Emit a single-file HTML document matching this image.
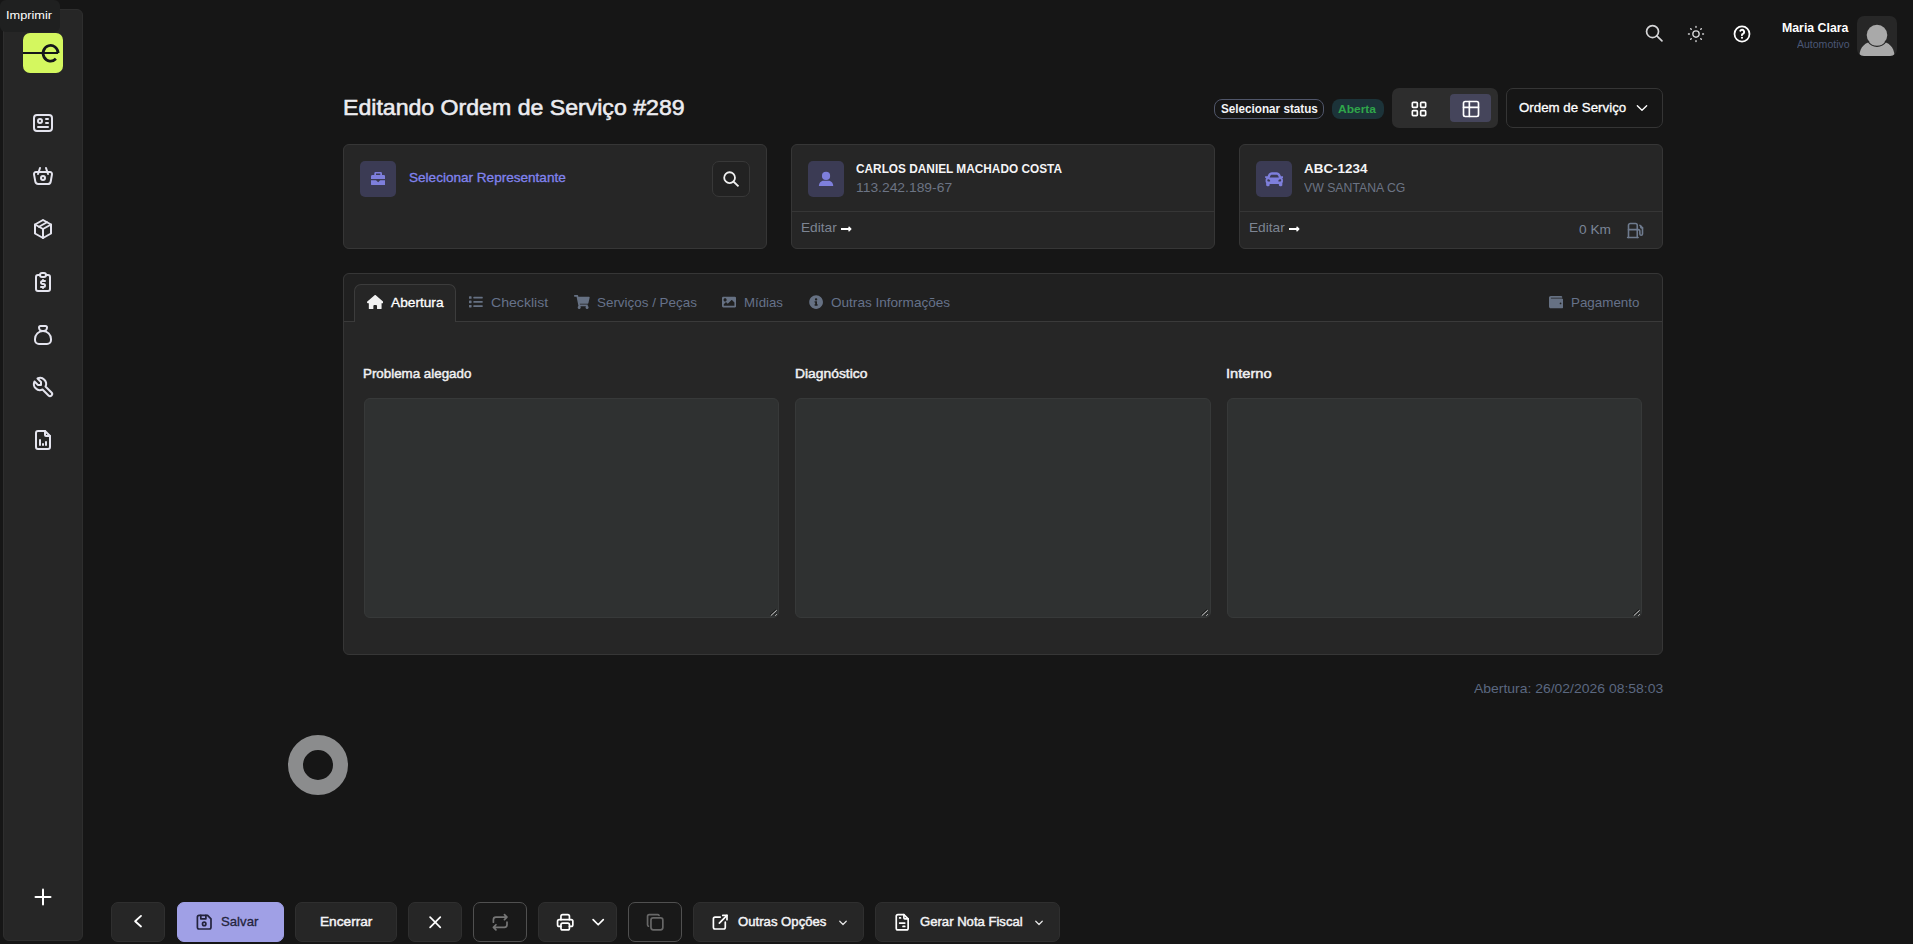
<!DOCTYPE html>
<html lang="pt-br">
<head>
<meta charset="utf-8">
<title>Editando Ordem de Serviço #289</title>
<style>
*{box-sizing:border-box;margin:0;padding:0}
html,body{width:1913px;height:944px;overflow:hidden;background:#161616}
body{font-family:"Liberation Sans",sans-serif;color:#f1f1f4;position:relative;font-size:13px}
.a{position:absolute}
.t{position:absolute;white-space:nowrap;line-height:1}
svg{display:block;position:absolute}
.st{fill:none;stroke:currentColor;stroke-width:2;stroke-linecap:round;stroke-linejoin:round}

/* sidebar */
#side{left:3px;top:9px;width:80px;height:932px;background:#262626;border:1px solid #2e2e2e;border-radius:6px}
#tip{left:0;top:0;width:60px;height:31.500px;background:#1f2020;border-radius:6px}
#logo{left:23px;top:33px;width:40px;height:40px;background:#d4f75f;border-radius:7px;overflow:hidden}
.si{color:#e4e4ee;width:24px;height:24px;left:31px}

/* cards */
.card{background:#262626;border:1px solid #363636;border-radius:6px}
.ib{width:36px;height:36px;border-radius:5px;background:#3b3b54}
.hr{height:1px;background:#363636}
.mut{color:#6c7484}

/* buttons */
.btn{top:902px;height:40px;border-radius:7px;background:#262626;border:1px solid #2f2f2f}
.btn.o{background:#191919;border-color:#505050}

.tabt{font-size:13px;color:#66728a}
.lbl{font-size:13px;color:#f1f1f3;-webkit-text-stroke:.45px #f1f1f3}
.ta{top:398px;width:415.330px;height:220px;background:#2f3131;border:1px solid #373939;border-radius:6px}
.rz{top:609px;width:8px;height:8px;fill:none;stroke-width:.9}
.bi{width:20.400px;height:20.400px;top:911.700px}
.bt{font-size:13px;color:#f4f4f6;top:915.200px;-webkit-text-stroke:.45px #f4f4f6}
</style>
</head>
<body>

<!-- SIDEBAR -->
<div class="a" id="side"></div>
<div class="a" id="tip"></div>
<div class="t" id="t_tip" style="left:5.89px;transform:scaleX(1.1605);transform-origin:0 0;top:10px;font-size:11px;color:#fff">Imprimir</div>
<div class="a" id="logo"><svg width="40" height="40" viewBox="0 0 40 40" style="left:0;top:0"><path d="M0 20.100H35" fill="none" stroke="#15171a" stroke-width="2"/><path d="M35.100 20.100A7.500 7.800 0 1 0 32.900 25.800" fill="none" stroke="#15171a" stroke-width="2.800"/></svg></div>
<svg class="si st" style="top:111px" viewBox="0 0 24 24"><path d="M3 7a3 3 0 0 1 3-3h12a3 3 0 0 1 3 3v10a3 3 0 0 1-3 3h-12a3 3 0 0 1-3-3z"/><path d="M7 10a2 2 0 1 0 4 0a2 2 0 1 0-4 0"/><path d="M15 8h2"/><path d="M15 12h2"/><path d="M7 16h10"/></svg>
<svg class="si st" style="top:164px" viewBox="0 0 24 24"><path d="M10 14a2 2 0 1 0 4 0a2 2 0 0 0-4 0"/><path d="M5.001 8h13.999a2 2 0 0 1 1.977 2.304l-1.255 7.152a3 3 0 0 1-2.966 2.544h-9.512a3 3 0 0 1-2.965-2.544l-1.255-7.152a2 2 0 0 1 1.977-2.304z"/><path d="M17 10l-2-6"/><path d="M7 10l2-6"/></svg>
<svg class="si st" style="top:217px" viewBox="0 0 24 24"><path d="M12 3l8 4.5v9l-8 4.500l-8-4.500v-9l8-4.500"/><path d="M12 12l8-4.500"/><path d="M12 12v9"/><path d="M12 12l-8-4.500"/><path d="M16 5.250l-8 4.500"/></svg>
<svg class="si st" style="top:270px" viewBox="0 0 24 24"><path d="M9 5h-2a2 2 0 0 0-2 2v12a2 2 0 0 0 2 2h10a2 2 0 0 0 2-2v-12a2 2 0 0 0-2-2h-2"/><path d="M9 5a2 2 0 0 1 2-2h2a2 2 0 0 1 2 2a2 2 0 0 1-2 2h-2a2 2 0 0 1-2-2z"/><path d="M14 11h-2.500a1.500 1.500 0 0 0 0 3h1a1.500 1.500 0 0 1 0 3h-2.500"/><path d="M12 17v1m0-8v1"/></svg>
<svg class="si st" style="top:323px" viewBox="0 0 24 24"><path d="M9.500 3h5a1.500 1.500 0 0 1 1.500 1.500a3.500 3.500 0 0 1-3.500 3.500h-1a3.500 3.500 0 0 1-3.500-3.500a1.500 1.500 0 0 1 1.500-1.500z"/><path d="M4 17v-1a8 8 0 1 1 16 0v1a4 4 0 0 1-4 4h-8a4 4 0 0 1-4-4z"/></svg>
<svg class="si st" style="top:375px" viewBox="0 0 24 24"><path d="M7 10h3v-3l-3.500-3.500a6 6 0 0 1 8 8l6 6a2 2 0 0 1-3 3l-6-6a6 6 0 0 1-8-8l3.500 3.500"/></svg>
<svg class="si st" style="top:428px" viewBox="0 0 24 24"><path d="M14 3v4a1 1 0 0 0 1 1h4"/><path d="M17 21h-10a2 2 0 0 1-2-2v-14a2 2 0 0 1 2-2h7l5 5v11a2 2 0 0 1-2 2z"/><path d="M9 17v-5"/><path d="M12 17v-1"/><path d="M15 17v-3"/></svg>
<svg class="si st" style="top:885px;color:#fff" viewBox="0 0 24 24"><path d="M12 4.500v15"/><path d="M4.500 12h15"/></svg>

<!-- HEADER -->
<svg class="st" style="left:1643.750px;top:23.250px;width:20.500px;height:20.500px;color:#d6d6d8;stroke-width:2" viewBox="0 0 24 24"><path d="M3 10a7 7 0 1 0 14 0a7 7 0 1 0-14 0"/><path d="M21 21l-6-6"/></svg>
<svg class="st" style="left:1686px;top:24px;width:20px;height:20px;color:#d6d6d8;stroke-width:1.7" viewBox="0 0 24 24"><path d="M8.200 12a3.800 3.800 0 1 0 7.600 0a3.800 3.800 0 1 0-7.600 0"/><path d="M3 12h1m8-9v1m8 8h1m-9 8v1m-6.400-15.400l.7.7m12.100-.7l-.7.7m0 11.400l.7.700m-12.100-.7l-.7.700"/></svg>
<svg class="st" style="left:1732px;top:24px;width:20px;height:20px;color:#fff;stroke-width:2.1" viewBox="0 0 24 24"><path d="M3 12a9 9 0 1 0 18 0a9 9 0 1 0-18 0"/><path d="M12 16.500v.01" stroke-width="2.6"/><path d="M12 13.300a1.500 1.500 0 0 1 1-1.500a2.500 2.500 0 1 0-3-3.700" stroke-width="2.4"/></svg>

<div class="t" id="uname" style="left:1781.87px;transform:scaleX(0.9471);transform-origin:0 0;top:21px;font-size:13px;font-weight:700;color:#fff">Maria Clara</div>
<div class="t" id="urole" style="left:1796.58px;transform:scaleX(1.051);transform-origin:0 0;top:40px;font-size:10px;color:#4b5675">Automotivo</div>
<div class="a" id="avatar" style="left:1857px;top:16px;width:40px;height:40px;border-radius:7px;background:#272727;overflow:hidden"><svg width="40" height="40" viewBox="0 0 40 40" style="left:0;top:0"><circle cx="20" cy="19" r="10.300" fill="#a9a9a9"/><path d="M2.500 40c0-9.500 7-14 12-14.500a10.300 10.300 0 0 0 11 0c5 .5 12 5 12 14.500z" fill="#a9a9a9"/><path d="M11 25.500a10.800 10.800 0 0 0 18 0" fill="none" stroke="#272727" stroke-width="1.200"/></svg></div>

<!-- TITLE ROW -->
<div class="t" id="title" style="left:342.57px;transform:scaleX(1.05);transform-origin:0 0;top:96.7px;font-size:22px;-webkit-text-stroke:.55px #ececf0;color:#ececf0">Editando Ordem de Serviço #289</div>


<div class="a" style="left:1214px;top:99px;width:110px;height:20px;border:1px solid #50566a;border-radius:8px;background:#161616"></div>
<div class="t" id="t_selst" style="left:1220.88px;transform:scaleX(0.9745);transform-origin:0 0;top:103px;font-size:12px;font-weight:700;color:#f4f4f6">Selecionar status</div>
<div class="a" style="left:1332px;top:99px;width:52px;height:20px;border-radius:8px;background:#1c3339"></div>
<div class="t" id="t_aberta" style="left:1338.46px;transform:scaleX(1.0912);transform-origin:0 0;top:103.500px;font-size:11px;font-weight:700;color:#2fa64a">Aberta</div>
<div class="a" style="left:1392px;top:88px;width:106px;height:40px;border-radius:7px;background:#2d2d2d"></div>
<div class="a" style="left:1450px;top:94px;width:41px;height:28px;border-radius:4px;background:#45455b"></div>
<svg class="st" style="left:1409px;top:99.300px;width:20px;height:20px;color:#fff" viewBox="0 0 24 24"><path d="M4 5a1 1 0 0 1 1-1h4a1 1 0 0 1 1 1v4a1 1 0 0 1-1 1h-4a1 1 0 0 1-1-1z"/><path d="M14 5a1 1 0 0 1 1-1h4a1 1 0 0 1 1 1v4a1 1 0 0 1-1 1h-4a1 1 0 0 1-1-1z"/><path d="M4 15a1 1 0 0 1 1-1h4a1 1 0 0 1 1 1v4a1 1 0 0 1-1 1h-4a1 1 0 0 1-1-1z"/><path d="M14 15a1 1 0 0 1 1-1h4a1 1 0 0 1 1 1v4a1 1 0 0 1-1 1h-4a1 1 0 0 1-1-1z"/></svg>
<svg class="st" style="left:1460.700px;top:98.900px;width:20px;height:20px;color:#fff" viewBox="0 0 24 24"><path d="M3 5a2 2 0 0 1 2-2h14a2 2 0 0 1 2 2v14a2 2 0 0 1-2 2h-14a2 2 0 0 1-2-2z"/><path d="M3 10h18"/><path d="M10 3v18"/></svg>
<div class="a" style="left:1506px;top:88px;width:157px;height:40px;border-radius:7px;background:#161616;border:1px solid #353535"></div>
<div class="t" id="t_os" style="left:1518.74px;transform:scaleX(1.0231);transform-origin:0 0;top:100.5px;font-size:13px;color:#fff;-webkit-text-stroke:.3px #fff">Ordem de Serviço</div>
<svg class="st" style="left:1633.900px;top:99.800px;width:16px;height:16px;color:#fff;stroke-width:2" viewBox="0 0 24 24"><path d="M5 8.500l7 7l7-7"/></svg>
<!-- TOP CARDS -->
<div class="a card" style="left:343px;top:144px;width:424px;height:105px"></div>
<div class="a card" style="left:791px;top:144px;width:424px;height:105px"></div>
<div class="a card" style="left:1239px;top:144px;width:424px;height:105px"></div>


<!-- card 1 -->
<div class="a ib" style="left:360px;top:161px"></div>
<svg style="left:370.900px;top:172px;width:14.300px;height:13.300px" viewBox="0 0 14.300 13.300"><path fill="#7e7fdc" fill-rule="evenodd" d="M3.300 3V1.400A1.400 1.400 0 0 1 4.700 0h4.900A1.400 1.400 0 0 1 11 1.400V3h1.900A1.400 1.400 0 0 1 14.300 4.400V7H0V4.400A1.400 1.400 0 0 1 1.400 3zM5 3h4.300V1.600H5zM0 8.200h5l2.150 2.100L9.300 8.200h5V11.900a1.400 1.400 0 0 1-1.400 1.400H1.400A1.400 1.400 0 0 1 0 11.900z"/></svg>
<div class="t" id="t_selrep" style="left:408.53px;transform:scaleX(1.0427);transform-origin:0 0;top:170.8px;font-size:13px;color:#8183ee;-webkit-text-stroke:.3px #8183ee">Selecionar Representante</div>
<div class="a" style="left:712px;top:161px;width:38px;height:36px;border-radius:7px;background:#222;border:1px solid #383838"></div>
<svg style="left:720px;top:168px;width:22px;height:22px;fill:none;stroke:#f0f0f0;stroke-width:1.800" viewBox="0 0 22 22"><circle cx="9.600" cy="9.650" r="5.400"/><path d="M13.400 13.500L18.500 18.400"/></svg>
<!-- card 2 -->
<div class="a ib" style="left:808px;top:161px"></div>
<svg style="left:818px;top:171px;width:16px;height:16px" viewBox="0 0 16 16"><circle cx="8.050" cy="4.900" r="4.100" fill="#7e7fdc"/><path fill="#7e7fdc" d="M.9 15c0-3 2-5.300 4.600-5.300h5.100c2.600 0 4.600 2.300 4.600 5.300z"/></svg>
<div class="t" id="t_name" style="left:856.45px;transform:scaleX(0.9102);transform-origin:0 0;top:161.5px;font-size:13px;font-weight:700;color:#f4f4f6">CARLOS DANIEL MACHADO COSTA</div>
<div class="t mut" id="t_cpf" style="left:856.13px;transform:scaleX(1.0663);transform-origin:0 0;top:180.5px;font-size:13px">113.242.189-67</div>
<div class="a hr" style="left:792px;top:211px;width:422px"></div>
<div class="t" id="t_ed1" style="left:801.28px;transform:scaleX(1.0515);transform-origin:0 0;top:220.7px;font-size:13px;color:#7d8593">Editar</div>
<svg style="left:841px;top:222.500px;width:10.500px;height:12px" viewBox="0 0 448 512"><path fill="#fff" d="M313.941 216H12c-6.627 0-12 5.373-12 12v56c0 6.627 5.373 12 12 12h301.941v46.059c0 21.382 25.851 32.090 40.971 16.971l86.059-86.059c9.373-9.373 9.373-24.569 0-33.941l-86.059-86.059c-15.119-15.119-40.971-4.411-40.971 16.971V216z"/></svg>
<!-- card 3 -->
<div class="a ib" style="left:1256px;top:161px"></div>
<svg style="left:1264.800px;top:169.800px;width:18.500px;height:18.500px" viewBox="0 0 512 512"><path fill="#7e7fdc" d="M499.990 176h-59.870l-16.640-41.600C406.380 91.630 365.570 64 319.500 64h-127c-46.060 0-86.880 27.630-103.990 70.400L71.870 176H12.010C4.200 176-1.530 183.340.370 190.910l6 24C7.700 220.250 12.500 224 18.010 224h20.070C24.650 235.730 16 252.780 16 272v48c0 16.120 6.160 30.670 16 41.930V416c0 17.670 14.330 32 32 32h32c17.670 0 32-14.330 32-32v-32h256v32c0 17.670 14.330 32 32 32h32c17.670 0 32-14.330 32-32v-54.070c9.840-11.250 16-25.800 16-41.930v-48c0-19.220-8.650-36.270-22.070-48H494c5.510 0 10.310-3.750 11.640-9.090l6-24c1.890-7.570-3.840-14.910-11.650-14.910zm-352.060-17.830c7.290-18.220 24.940-30.170 44.570-30.170h127c19.630 0 37.280 11.950 44.570 30.170L384 208H128l19.930-49.830zM96 319.800c-19.200 0-32-12.760-32-31.900S76.800 256 96 256s48 28.710 48 47.850-28.800 15.950-48 15.950zm320 0c-19.200 0-48 3.190-48-15.950S396.800 256 416 256s32 12.760 32 31.900-12.800 31.900-32 31.900z"/></svg>
<div class="t" id="t_plate" style="left:1303.8px;transform:scaleX(1.0333);transform-origin:0 0;top:161.5px;font-size:13px;font-weight:700;color:#f4f4f6">ABC-1234</div>
<div class="t mut" id="t_model" style="left:1304.09px;transform:scaleX(0.9443);transform-origin:0 0;top:180.5px;font-size:13px">VW SANTANA CG</div>
<div class="a hr" style="left:1240px;top:211px;width:422px"></div>
<div class="t" id="t_ed2" style="left:1249.28px;transform:scaleX(1.0515);transform-origin:0 0;top:220.7px;font-size:13px;color:#7d8593">Editar</div>
<svg style="left:1289px;top:222.500px;width:10.500px;height:12px" viewBox="0 0 448 512"><path fill="#fff" d="M313.941 216H12c-6.627 0-12 5.373-12 12v56c0 6.627 5.373 12 12 12h301.941v46.059c0 21.382 25.851 32.090 40.971 16.971l86.059-86.059c9.373-9.373 9.373-24.569 0-33.941l-86.059-86.059c-15.119-15.119-40.971-4.411-40.971 16.971V216z"/></svg>
<div class="t" id="t_km" style="left:1578.7px;transform:scaleX(1.0552);transform-origin:0 0;top:223px;font-size:13px;color:#7a8597">0 Km</div>
<svg class="st" style="left:1625px;top:219.500px;width:21px;height:21px;color:#6f7b8e;stroke-width:1.800" viewBox="0 0 24 24"><path d="M14 11h1a2 2 0 0 1 2 2v3a1.500 1.500 0 0 0 3 0v-7l-3-3"/><path d="M4 20v-14a2 2 0 0 1 2-2h6a2 2 0 0 1 2 2v14"/><path d="M3 20h12"/><path d="M18 7v1a1 1 0 0 0 1 1h1"/><path d="M4 11h10"/></svg>
<!-- MAIN CARD -->
<div class="a card" id="main" style="left:343px;top:273px;width:1320px;height:382px"></div>


<div class="a" style="left:344px;top:274px;width:1318px;height:47px;background:#202020;border-radius:6px 6px 0 0"></div>
<div class="a" style="left:344px;top:321px;width:1318px;height:1px;background:#3a3a3a"></div>
<div class="a" style="left:354px;top:284px;width:102px;height:38px;background:#262626;border:1px solid #3c3c3c;border-bottom:none;border-radius:7px 7px 0 0"></div>
<svg style="left:366.700px;top:294.600px;width:16.400px;height:14.600px" viewBox="0 0 576 512"><path fill="#f2f2f2" d="M575.800 255.500c0 18-15 32.100-32 32.100h-32l.7 160.200c0 2.700-.2 5.400-.5 8.100V472c0 22.100-17.900 40-40 40H456c-1.100 0-2.200 0-3.300-.1c-1.400.1-2.800.1-4.200.1H416 392c-22.100 0-40-17.900-40-40V448 384c0-17.700-14.300-32-32-32H256c-17.700 0-32 14.300-32 32v64 24c0 22.100-17.900 40-40 40H160 128.100c-1.500 0-3-.1-4.500-.2c-1.200.1-2.400.2-3.600.2H104c-22.100 0-40-17.900-40-40V360c0-.9 0-1.900.1-2.800V287.600H32c-18 0-32-14-32-32.100c0-9 3-17 10-24L266.400 8c7-7 15-8 22-8s15 2 21 7L564.800 231.500c8 7 12 15 11 24z"/></svg>
<div class="t" id="t_tab1" style="left:390.72px;transform:scaleX(1.054);transform-origin:0 0;top:296px;font-size:13px;color:#fff;-webkit-text-stroke:.3px #fff">Abertura</div>
<svg style="left:469.300px;top:295.200px;width:13.750px;height:13.750px" viewBox="0 0 512 512"><path fill="#667183" d="M80 368H16a16 16 0 0 0-16 16v64a16 16 0 0 0 16 16h64a16 16 0 0 0 16-16v-64a16 16 0 0 0-16-16zm0-320H16A16 16 0 0 0 0 64v64a16 16 0 0 0 16 16h64a16 16 0 0 0 16-16V64a16 16 0 0 0-16-16zm0 160H16a16 16 0 0 0-16 16v64a16 16 0 0 0 16 16h64a16 16 0 0 0 16-16v-64a16 16 0 0 0-16-16zm416 176H176a16 16 0 0 0-16 16v32a16 16 0 0 0 16 16h320a16 16 0 0 0 16-16v-32a16 16 0 0 0-16-16zm0-320H176a16 16 0 0 0-16 16v32a16 16 0 0 0 16 16h320a16 16 0 0 0 16-16V80a16 16 0 0 0-16-16zm0 160H176a16 16 0 0 0-16 16v32a16 16 0 0 0 16 16h320a16 16 0 0 0 16-16v-32a16 16 0 0 0-16-16z"/></svg>
<div class="t tabt" id="t_tab2" style="left:491.26px;transform:scaleX(1.0846);transform-origin:0 0;top:296px">Checklist</div>
<svg style="left:573.900px;top:295px;width:15.700px;height:13.960px" viewBox="0 0 576 512"><path fill="#667183" d="M528.120 301.319l47.273-208C578.806 78.301 567.391 64 551.990 64H159.208l-9.166-44.810C147.758 8.021 137.930 0 126.529 0H24C10.745 0 0 10.745 0 24v16c0 13.255 10.745 24 24 24h69.883l70.248 343.435C147.325 417.100 136 435.222 136 456c0 30.928 25.072 56 56 56s56-25.072 56-56c0-15.674-6.447-29.835-16.824-40h209.647C430.447 426.165 424 440.326 424 456c0 30.928 25.072 56 56 56s56-25.072 56-56c0-22.172-12.888-41.332-31.579-50.405l5.517-24.276c3.413-15.018-8.002-29.319-23.403-29.319H218.117l-6.545-32h293.145c11.206 0 20.920-7.754 23.403-18.681z"/></svg>
<div class="t tabt" id="t_tab3" style="left:596.63px;transform:scaleX(1.0316);transform-origin:0 0;top:296px">Serviços / Peças</div>
<svg style="left:721.900px;top:295px;width:14.200px;height:14.200px" viewBox="0 0 512 512"><path fill="#667183" d="M464 448H48c-26.510 0-48-21.490-48-48V112c0-26.510 21.490-48 48-48h416c26.510 0 48 21.490 48 48v288c0 26.510-21.490 48-48 48zM112 120c-30.928 0-56 25.072-56 56s25.072 56 56 56 56-25.072 56-56-25.072-56-56-56zM64 384h384V272l-87.515-87.515c-4.686-4.686-12.284-4.686-16.971 0L208 320l-55.515-55.515c-4.686-4.686-12.284-4.686-16.971 0L64 336v48z"/></svg>
<div class="t tabt" id="t_tab4" style="left:743.7px;transform:scaleX(1.0162);transform-origin:0 0;top:296px">Mídias</div>
<svg style="left:808.900px;top:295px;width:14.200px;height:14.200px" viewBox="0 0 512 512"><path fill="#667183" d="M256 8C119.043 8 8 119.083 8 256c0 136.997 111.043 248 248 248s248-111.003 248-248C504 119.083 392.957 8 256 8zm0 110c23.196 0 42 18.804 42 42s-18.804 42-42 42-42-18.804-42-42 18.804-42 42-42zm56 254c0 6.627-5.373 12-12 12h-88c-6.627 0-12-5.373-12-12v-24c0-6.627 5.373-12 12-12h12v-64h-12c-6.627 0-12-5.373-12-12v-24c0-6.627 5.373-12 12-12h64c6.627 0 12 5.373 12 12v100h12c6.627 0 12 5.373 12 12v24z"/></svg>
<div class="t tabt" id="t_tab5" style="left:830.75px;transform:scaleX(1.0434);transform-origin:0 0;top:296px">Outras Informações</div>
<svg style="left:1549px;top:295px;width:14.200px;height:14.200px" viewBox="0 0 512 512"><path fill="#667183" d="M461.200 128H80c-8.840 0-16-7.160-16-16s7.160-16 16-16h384c8.840 0 16-7.160 16-16 0-26.510-21.490-48-48-48H64C28.650 32 0 60.650 0 96v320c0 35.350 28.650 64 64 64h397.200c28.020 0 50.800-21.530 50.800-48V176c0-26.470-22.780-48-50.800-48zM416 336c-17.670 0-32-14.330-32-32s14.330-32 32-32 32 14.330 32 32-14.330 32-32 32z"/></svg>
<div class="t tabt" id="t_tab6" style="left:1570.65px;transform:scaleX(1.0292);transform-origin:0 0;top:296px">Pagamento</div>

<div class="t lbl" id="t_l1" style="left:363.01px;transform:scaleX(1.0269);transform-origin:0 0;top:367px">Problema alegado</div>
<div class="t lbl" id="t_l2" style="left:795.28px;transform:scaleX(1.0657);transform-origin:0 0;top:367px">Diagnóstico</div>
<div class="t lbl" id="t_l3" style="left:1225.89px;transform:scaleX(1.1282);transform-origin:0 0;top:367px">Interno</div>
<div class="a ta" style="left:364px"></div>
<div class="a ta" style="left:795.330px"></div>
<div class="a ta" style="left:1226.670px"></div>

<svg class="rz" style="left:770px" viewBox="0 0 8 8"><path stroke="#121212" d="M0 5.850L5.900.45M4.600 5.900L5.900 4.400"/><path stroke="#dcdcdc" d="M.8 6.650L6.700 1.250M5.400 6.700L6.700 5.200"/></svg>
<svg class="rz" style="left:1201.33px" viewBox="0 0 8 8"><path stroke="#121212" d="M0 5.850L5.900.45M4.600 5.900L5.900 4.400"/><path stroke="#dcdcdc" d="M.8 6.650L6.700 1.250M5.400 6.700L6.700 5.200"/></svg>
<svg class="rz" style="left:1632.67px" viewBox="0 0 8 8"><path stroke="#121212" d="M0 5.850L5.900.45M4.600 5.900L5.900 4.400"/><path stroke="#dcdcdc" d="M.8 6.650L6.700 1.250M5.400 6.700L6.700 5.200"/></svg>
<div class="t" id="t_foot" style="left:1473.8px;transform:scaleX(1.0726);transform-origin:0 0;top:682px;font-size:13px;color:#5b6880">Abertura: 26/02/2026 08:58:03</div>
<div class="a" style="left:288px;top:735px;width:60px;height:60px;border-radius:50%;border:15px solid #8b8c8d"></div>
<!-- BOTTOM BAR -->
<div class="a btn" style="left:111px;width:54px"></div>
<div class="a btn" style="left:177px;width:107px;background:#a0a0e6;border-color:#a0a0e6"></div>
<div class="a btn" style="left:295px;width:102px"></div>
<div class="a btn" style="left:408px;width:54px"></div>
<div class="a btn o" style="left:473px;width:54px"></div>
<div class="a btn" style="left:538px;width:79px"></div>
<div class="a btn o" style="left:628px;width:54px"></div>
<div class="a btn" style="left:693px;width:171px"></div>
<div class="a btn" style="left:875px;width:185px"></div>


<svg class="st" style="left:127.500px;top:911.400px;width:20.400px;height:20.400px;color:#fff;stroke-width:2.200" viewBox="0 0 24 24"><path d="M15.300 5.800l-6.900 6.200l6.900 6.200"/></svg>
<svg class="st bi" style="left:193.650px;color:#23233c" viewBox="0 0 24 24"><path d="M6 4h10l4 4v10a2 2 0 0 1-2 2h-12a2 2 0 0 1-2-2v-12a2 2 0 0 1 2-2"/><path d="M10 14a2 2 0 1 0 4 0a2 2 0 1 0-4 0"/><path d="M14 4v4h-6v-4"/></svg>
<div class="t" id="t_salvar" style="left:220.78px;transform:scaleX(1.0139);transform-origin:0 0;top:915.200px;font-size:13px;color:#24243c;-webkit-text-stroke:.3px #24243c">Salvar</div>
<div class="t bt" id="t_enc" style="left:319.69px;transform:scaleX(1.051);transform-origin:0 0;">Encerrar</div>
<svg class="st bi" style="left:424.800px;color:#fff" viewBox="0 0 24 24"><path d="M18 6l-12 12"/><path d="M6 6l12 12"/></svg>
<svg class="st bi" style="left:490px;color:#767676" viewBox="0 0 24 24"><path d="M4 12v-3a3 3 0 0 1 3-3h13m-3-3l3 3l-3 3"/><path d="M20 12v3a3 3 0 0 1-3 3h-13m3 3l-3-3l3-3"/></svg>
<svg class="st bi" style="left:554.900px;color:#fff" viewBox="0 0 24 24"><path d="M17 17h2a2 2 0 0 0 2-2v-4a2 2 0 0 0-2-2h-14a2 2 0 0 0-2 2v4a2 2 0 0 0 2 2h2"/><path d="M17 9v-4a2 2 0 0 0-2-2h-6a2 2 0 0 0-2 2v4"/><path d="M7 15a2 2 0 0 1 2-2h6a2 2 0 0 1 2 2v4a2 2 0 0 1-2 2h-6a2 2 0 0 1-2-2z"/></svg>
<svg class="st bi" style="left:587.650px;color:#fff" viewBox="0 0 24 24"><path d="M6 9l6 6l6-6"/></svg>
<svg class="st bi" style="left:644.700px;color:#676767" viewBox="0 0 24 24"><path d="M7 9.667a2.667 2.667 0 0 1 2.667-2.667h8.666a2.667 2.667 0 0 1 2.667 2.667v8.666a2.667 2.667 0 0 1-2.667 2.667h-8.666a2.667 2.667 0 0 1-2.667-2.667z"/><path d="M4.012 16.737a2.005 2.005 0 0 1-1.012-1.737v-10c0-1.100.9-2 2-2h10c.75 0 1.158.385 1.500 1"/></svg>
<svg class="st bi" style="left:709.800px;color:#fff" viewBox="0 0 24 24"><path d="M12 6h-6a2 2 0 0 0-2 2v10a2 2 0 0 0 2 2h10a2 2 0 0 0 2-2v-6"/><path d="M11 13l9-9"/><path d="M15 4h5v5"/></svg>
<div class="t bt" id="t_outras" style="left:738.17px;transform:scaleX(1.0115);transform-origin:0 0;">Outras Opções</div>
<svg class="st" style="left:837.400px;top:917px;width:12px;height:12px;color:#e8e8e8;stroke-width:2.400" viewBox="0 0 24 24"><path d="M5.500 8.500l6.500 6.500l6.500-6.500"/></svg>
<svg class="st bi" style="left:891.800px;color:#fff" viewBox="0 0 24 24"><path d="M14 3v4a1 1 0 0 0 1 1h4"/><path d="M17 21h-10a2 2 0 0 1-2-2v-14a2 2 0 0 1 2-2h7l5 5v11a2 2 0 0 1-2 2z"/><path d="M9 7h1"/><path d="M9 13h6"/><path d="M13 17h2"/></svg>
<div class="t bt" id="t_gerar" style="left:920.14px;transform:scaleX(1.0079);transform-origin:0 0;">Gerar Nota Fiscal</div>
<svg class="st" style="left:1032.500px;top:917px;width:12px;height:12px;color:#e8e8e8;stroke-width:2.400" viewBox="0 0 24 24"><path d="M5.500 8.500l6.500 6.500l6.500-6.500"/></svg>
</body>
</html>
